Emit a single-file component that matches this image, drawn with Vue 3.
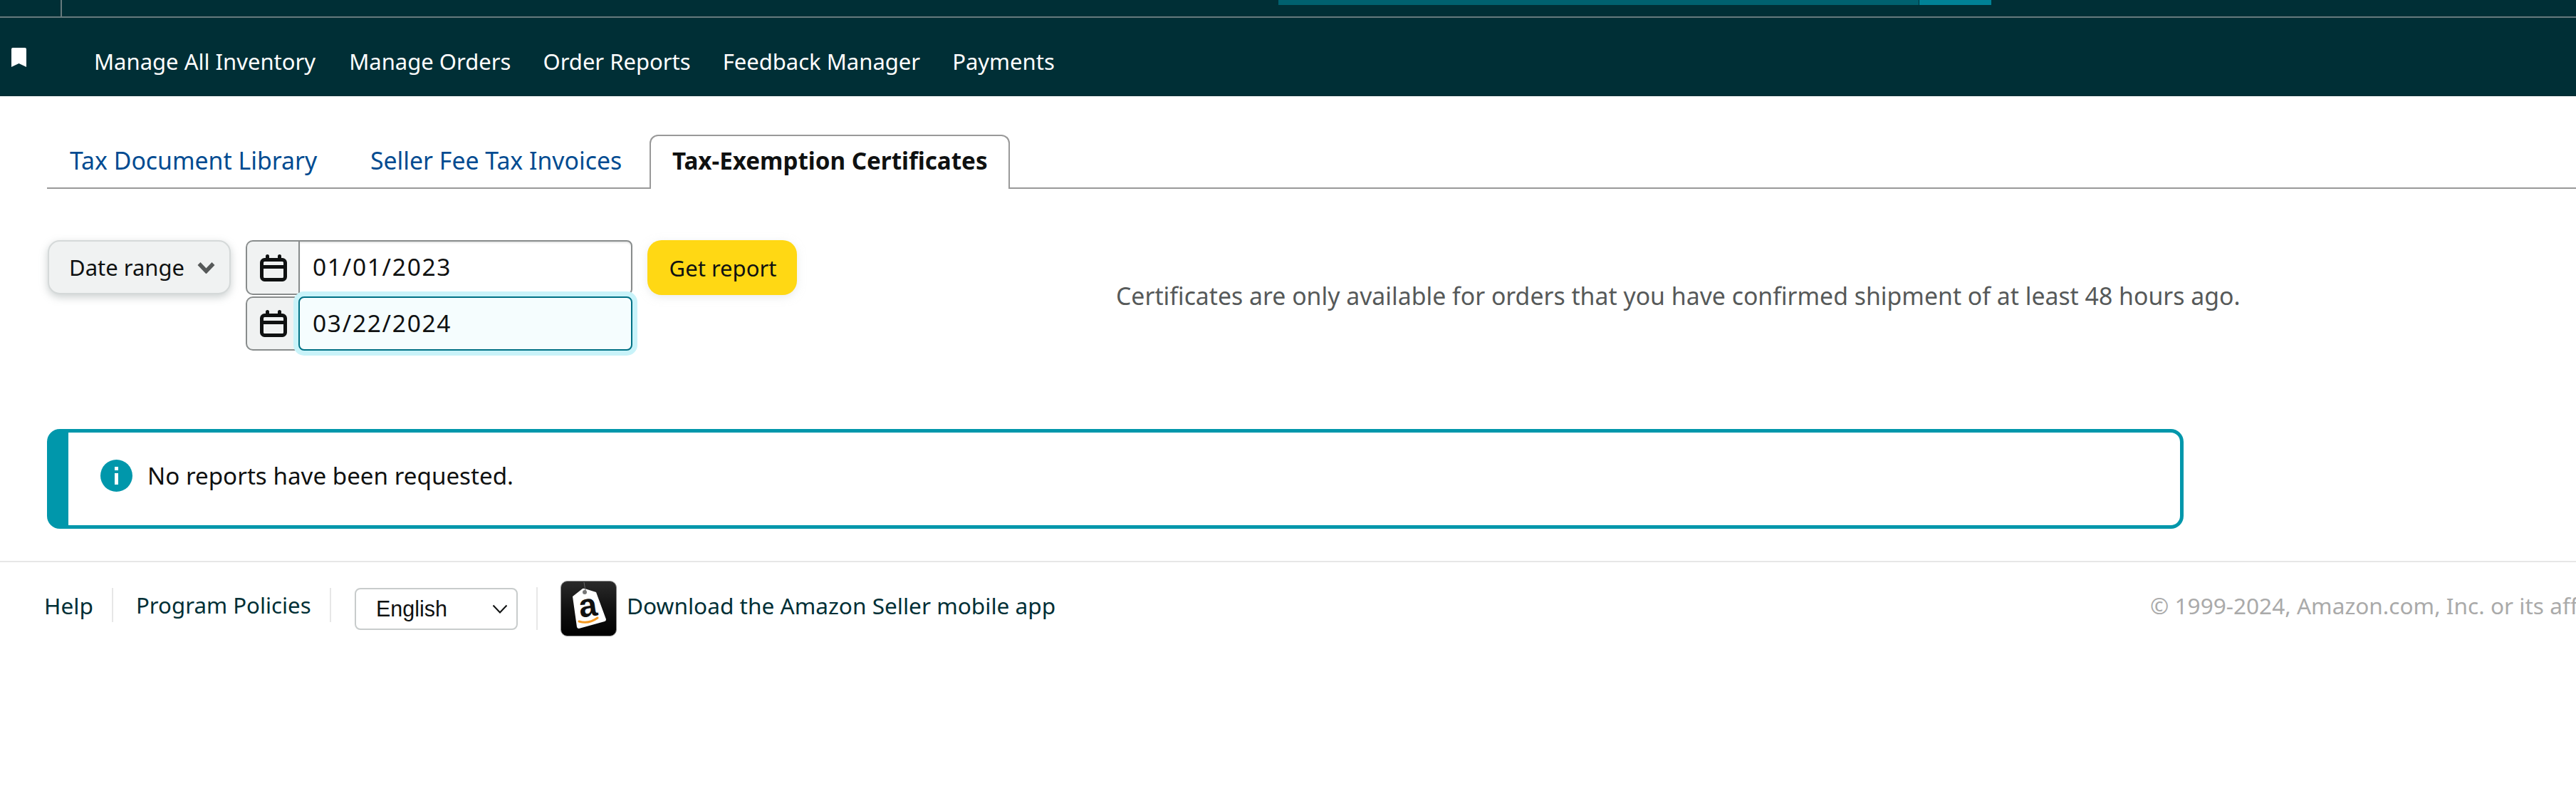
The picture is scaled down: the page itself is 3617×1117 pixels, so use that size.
<script setup>
const navItems = ['Manage All Inventory', 'Manage Orders', 'Order Reports', 'Feedback Manager', 'Payments']
const dates = [
  { value: '01/01/2023', focused: false },
  { value: '03/22/2024', focused: true }
]
</script>

<template>
  <div class="page">
    <header class="header">
      <div class="top-strip">
        <div class="top-left"></div>
        <div class="progress">
          <div class="progress-main"></div>
          <div class="progress-end"></div>
        </div>
      </div>
      <nav class="nav">
        <svg class="bookmark" viewBox="0 0 21 27" aria-hidden="true">
          <path d="M2 0h17a2 2 0 0 1 2 2v25l-10.5-5L0 27V2a2 2 0 0 1 2-2z" fill="#fff" />
        </svg>
        <a v-for="item in navItems" :key="item" class="nav-link">{{ item }}</a>
      </nav>
    </header>

    <main class="main">
      <div class="tabs">
        <a class="tab tab-one">Tax Document Library</a>
        <a class="tab tab-two">Seller Fee Tax Invoices</a>
        <a class="tab tab-active">Tax-Exemption Certificates</a>
      </div>

      <section class="form-row">
        <button class="range-btn" type="button">
          <span>Date range</span>
          <svg class="range-chevron" viewBox="0 0 25 17" aria-hidden="true">
            <path d="M2.500 3l10 10.500L22.500 3" fill="none" stroke="#565959" stroke-width="5.500" />
          </svg>
        </button>
        <div class="dates">
          <div v-for="d in dates" :key="d.value" class="date-row" :class="{ focused: d.focused }">
            <div class="addon">
              <svg class="cal" viewBox="0 0 38 38" aria-hidden="true">
                <rect x="2.500" y="7.500" width="33" height="28" rx="4" fill="none" stroke="#0f1111" stroke-width="5" />
                <rect x="2.500" y="15" width="33" height="5" fill="#0f1111" />
                <rect x="8" y="0" width="5" height="8" rx="2.5" fill="#0f1111" />
                <rect x="25" y="0" width="5" height="8" rx="2.5" fill="#0f1111" />
              </svg>
            </div>
            <div class="date-input">{{ d.value }}</div>
          </div>
        </div>
        <button class="report-btn" type="button">Get report</button>
        <p class="note">Certificates are only available for orders that you have confirmed shipment of at least 48 hours ago.</p>
      </section>

      <section class="alert">
        <svg class="info" viewBox="0 0 45 45" aria-hidden="true">
          <circle cx="22.5" cy="22.5" r="22.5" fill="#0097ab" />
          <rect x="20" y="19" width="5" height="16" fill="#fff" />
          <rect x="20" y="10" width="5" height="5" fill="#fff" />
        </svg>
        <span>No reports have been requested.</span>
      </section>
    </main>

    <footer class="footer">
      <a class="foot-link help">Help</a>
      <span class="sep short"></span>
      <a class="foot-link policies">Program Policies</a>
      <span class="sep short"></span>
      <div class="lang">
        <span>English</span>
        <svg class="lang-chevron" viewBox="0 0 22 13" aria-hidden="true">
          <path d="M1.5 1.5L11 11.5l9.500-10" fill="none" stroke="#0f1111" stroke-width="2" />
        </svg>
      </div>
      <span class="sep tall"></span>
      <svg class="app-logo" viewBox="0 0 79 78" aria-hidden="true">
        <defs>
          <linearGradient id="logoBg" x1="0" y1="0" x2="0" y2="1">
            <stop offset="0" stop-color="#2a2a2a" />
            <stop offset="0.5" stop-color="#111" />
            <stop offset="1" stop-color="#000" />
          </linearGradient>
        </defs>
        <rect x="0.500" y="0.500" width="78" height="77" rx="9" fill="url(#logoBg)" stroke="#888" stroke-width="1" />
        <path d="M17 22L31 11a4 4 0 0 1 3 0l16 5 14 38a3 3 0 0 1-2 3L26 67a3 3 0 0 1-3-2L17 22z" fill="#fff" />
        <circle cx="34" cy="16" r="3" fill="#777" />
        <path d="M35 14L33 2" stroke="#666" stroke-width="1" />
        <text x="39" y="50" class="logo-a" text-anchor="middle" transform="rotate(-8 39 40)">a</text>
        <path d="M26 57q14 4 26-5" fill="none" stroke="#f59a23" stroke-width="3" stroke-linecap="round" />
      </svg>
      <a class="foot-link download">Download the Amazon Seller mobile app</a>
      <span class="copyright">© 1999-2024, Amazon.com, Inc. or its affiliates</span>
    </footer>
  </div>
</template>

<style scoped>
.page {
  width: 3617px;
  height: 1117px;
  overflow: hidden;
  background: #fff;
  font-family: "Noto Sans", "Open Sans", sans-serif;
  font-size: 31px;
  color: #0f1111;
}
.header { background: #002f36; height: 135px; }
.top-strip {
  position: relative;
  height: 23px;
  border-bottom: 2px solid #667a7d;
}
.top-left { width: 85px; height: 23px; border-right: 2px solid #667a7d; box-sizing: content-box; }
.progress { position: absolute; left: 1795px; top: 0; display: flex; height: 7px; }
.progress-main { width: 899px; background: #00616f; }
.progress-end { width: 101px; margin-left: 1px; background: #008296; }
.nav { display: flex; align-items: center; height: 110px; box-sizing: border-box; padding: 11px 0 0 16px; }
.bookmark { width: 21px; height: 27px; margin-right: 95px; margin-top: -10px; }
.nav-link { color: #fff; margin-right: 45px; line-height: 40px; white-space: nowrap; }
.nav-link:first-of-type { margin-right: 47px; }

.main { padding-left: 66px; }
.tabs {
  display: flex;
  margin-top: 54px;
  height: 74px;
  border-bottom: 2px solid #999;
  font-size: 33.8px;
}
.tab { line-height: 72px; white-space: nowrap; color: #004b91; }
.tab-one { padding-left: 32px; width: 454px; box-sizing: border-box; }
.tab-two { width: 392px; }
.tab-active {
  width: 506px;
  height: 76px;
  box-sizing: border-box;
  padding-left: 30px;
  border: 2px solid #999;
  border-bottom: none;
  border-radius: 12px 12px 0 0;
  background: #fff;
  color: #0f1111;
  font-weight: 700;
  font-size: 33.2px;
  line-height: 70px;
}

.form-row { display: flex; align-items: flex-start; margin-top: 72px; height: 155px; }
.range-btn {
  display: flex;
  align-items: center;
  justify-content: space-between;
  width: 257px;
  height: 76px;
  margin-left: 1px;
  box-sizing: border-box;
  padding: 0 20px 0 28px;
  background: #f0f2f2;
  border: 2px solid #d5d9d9;
  border-radius: 17px;
  box-shadow: 0 4px 12px rgba(190, 196, 196, 0.8);
  font: inherit;
  color: #0f1111;
}
.range-chevron { width: 25px; height: 17px; }
.dates { display: flex; flex-direction: column; gap: 2px; width: 543px; margin-left: 21px; }
.date-row { display: flex; height: 77px; }
.date-row.focused { height: 76px; }
.addon {
  display: flex;
  align-items: center;
  justify-content: center;
  width: 74px;
  box-sizing: border-box;
  padding-left: 1px;
  background: #f0f2f2;
  border: 2px solid #888c8c;
  border-right: none;
  border-radius: 10px 0 0 10px;
}
.cal { width: 38px; height: 38px; }
.date-input {
  flex: 1;
  box-sizing: border-box;
  padding-left: 18px;
  border: 2px solid #888c8c;
  border-radius: 0 8px 8px 0;
  font-size: 33.5px;
  letter-spacing: 1.7px;
  line-height: 70px;
  background: #fff;
  box-shadow: inset 0 2px 2px rgba(15, 17, 17, 0.1);
}
.focused .date-input {
  position: relative;
  background: #f5fdfe;
  border-color: #007185;
  box-shadow: 0 0 0 7px #c9f3f9;
  border-radius: 8px;
}
.report-btn {
  width: 210px;
  height: 77px;
  margin-left: 21px;
  padding-left: 8px;
  background: #ffd814;
  border: none;
  border-radius: 20px;
  box-shadow: 0 3px 12px rgba(213, 217, 217, 0.5);
  font: inherit;
  color: #0f1111;
}
.note { margin: 0 0 0 448px; align-self: center; color: #565959; white-space: nowrap; font-size: 33.8px; }

.alert {
  display: flex;
  align-items: center;
  gap: 21px;
  width: 3000px;
  height: 140px;
  margin-top: 110px;
  box-sizing: border-box;
  padding-left: 45px;
  padding-bottom: 10px;
  border: 5px solid #0097ab;
  border-left-width: 30px;
  border-radius: 18px;
  font-size: 33.2px;
}
.info { width: 45px; height: 45px; flex: none; }

.footer {
  display: flex;
  align-items: center;
  margin-top: 45px;
  padding: 26px 0 0 62px;
  border-top: 2px solid #e7e7e7;
  height: 78px;
  white-space: nowrap;
  font-size: 31.6px;
}
.footer > * { flex: none; }
.foot-link { color: #002f36; padding-bottom: 10px; }
.sep { width: 2px; background: #e7e7e7; }
.short { height: 48px; margin-bottom: 10px; }
.tall { height: 60px; margin-left: 26px; margin-right: 32px; }
.help { width: 95px; }
.policies { width: 272px; margin-left: 32px; font-size: 31.2px; }
.lang {
  display: flex;
  align-items: center;
  justify-content: space-between;
  width: 229px;
  height: 59px;
  box-sizing: border-box;
  margin-left: 33px;
  padding: 0 12px 0 28px;
  border: 2px solid #c8cccc;
  border-radius: 8px;
  font-family: "Liberation Sans", Arial, sans-serif;
  font-size: 30.5px;
}
.lang-chevron { width: 22px; height: 13px; }
.app-logo { width: 79px; height: 78px; }
.logo-a { font-family: "Liberation Sans", sans-serif; font-weight: 700; font-size: 46px; fill: #111; }
.download { margin-left: 14px; width: 2139px; }
.copyright { color: #aaa; padding-bottom: 10px; }
</style>
